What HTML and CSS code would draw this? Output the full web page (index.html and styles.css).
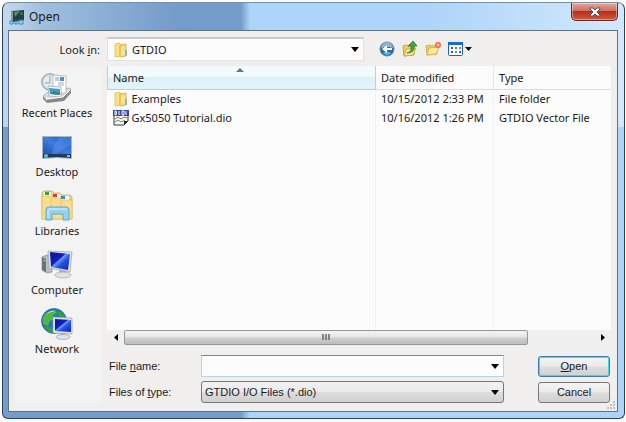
FILE: index.html
```html
<!DOCTYPE html>
<html lang="en">
<head>
  <meta charset="UTF-8" />
  <meta name="viewport" content="width=device-width, initial-scale=1.0"/>
  <title>Open</title>
  <link rel="stylesheet" href="styles.css">
</head>
<body>

  <div class="window">
    <header class="titlebar">
      <svg class="title-icon" width="16" height="16" viewBox="0 0 16 16">
        <path d="M2 2l2-1v12l-2-1z" fill="#8c9a9c"/>
        <path d="M4 2l11-1v10L4 13z" fill="#23413a"/>
        <path d="M5 3l6-1-5 6z" fill="#5f8b78"/>
        <path d="M11 3h3v3h-3z" fill="#3b6655"/>
        <path d="M1 12h3v3H1zM6 12h2v3H6zM10 11h4v4h-4z" fill="none" stroke="#2d8ac4"/>
      </svg>
      <h1>Open</h1>
      <button class="close" aria-label="Close">
        <svg width="12" height="10" viewBox="0 0 12 10">
          <path d="M1 1h3l2 2 2-2h3v1L8 5l3 3v1H8L6 7 4 9H1V8l3-3-3-3z" fill="#fff" stroke="#6b4a52" stroke-width="1"/>
        </svg>
      </button>
    </header>

    <main class="client">
      <label class="look-label" for="lookIn">Look <u>i</u>n:</label>
      <div class="look-row">
        <div class="combo look-combo">
          <svg class="combo-icon" width="16" height="16" viewBox="0 0 16 16">
            <path d="M2 2l5-1v13l-5 1z" fill="#f8e08a" stroke="#e6c765"/>
            <path d="M7 3l6-1v12l-6 1z" fill="#f3d26a" stroke="#e0b94e"/>
            <path d="M8 5l4-1v9l-4 1z" fill="#f9e290"/>
            <path d="M12 8h2v6h-2z" fill="#8cb9c4"/>
          </svg>
          <select id="lookIn"><option>GTDIO</option></select>
          <svg class="arrow" width="8" height="5" viewBox="0 0 8 5"><path d="M0 0h8L4 5z"/></svg>
        </div>
        <div class="toolbar">
          <button aria-label="Back">
            <svg width="16" height="16" viewBox="0 0 16 16">
              <circle cx="8" cy="8" r="7" fill="#2a6aa8" stroke="#6d7d8e"/>
              <path d="M2 7a6 6 0 0 1 12 0q-6-2-12 0z" fill="#8fb3d2"/>
              <path d="M4 12q4 4 8 0-4-3-8 0z" fill="#40c0ee"/>
              <path d="M3 8l5-4v3h5v2H8v3z" fill="#fff"/>
            </svg>
          </button>
          <button aria-label="Up One Level">
            <svg width="16" height="16" viewBox="0 0 16 16">
              <path d="M1 5l4-1 1 1 6-1v10l-10 1z" fill="#f2cd62" stroke="#cfa43c"/>
              <path d="M2 15l2-7 10-1-3 7z" fill="#fbe89a" stroke="#d5ab42"/>
              <path d="M5 12q5-1 4-7H6l5-5 4 5h-3q1 7-7 7z" fill="#3cab35" stroke="#1c7424" stroke-width=".7"/>
            </svg>
          </button>
          <button aria-label="Create New Folder">
            <svg width="16" height="16" viewBox="0 0 16 16">
              <path d="M1 5l4-1 1 1 6-1v9L2 14z" fill="#f2cd62" stroke="#d8b04a"/>
              <path d="M2 14l2-7 10-1-3 7z" fill="#fdeaa2" stroke="#dbb44e"/>
              <circle cx="13" cy="4" r="3" fill="#f26a3c"/>
              <path d="M13 2v4M11 4h4" stroke="#ffc8a0"/>
            </svg>
          </button>
          <button class="view-button" aria-label="View Menu">
            <svg width="25" height="14" viewBox="0 0 25 14">
              <rect x=".5" y=".5" width="14" height="13" rx="1" fill="#fff" stroke="#1563c8"/>
              <path d="M0 0h15v3H0z" fill="#1b6ad4"/>
              <path d="M3 5h2v2H3zM11 9h2v2h-2z" fill="#3a62c0"/>
              <path d="M7 5h2v2H7z" fill="#4a9a5a"/>
              <path d="M11 5h2v2h-2z" fill="#d86a4a"/>
              <path d="M3 9h2v2H3z" fill="#555"/>
              <path d="M7 9h2v2H7z" fill="#38a0dc"/>
              <path d="M17 5h7l-3.500 4z" fill="#111"/>
            </svg>
          </button>
        </div>
      </div>

      <nav class="places">
        <a href="#">
          <svg width="32" height="32" viewBox="0 0 32 32">
            <path d="M2 24l20-2 8-5v4l-7 8-17 2-4-4z" fill="#85898b"/>
            <path d="M2 24l5-4 21-4 2 1-8 8-17 3z" fill="#d9dddd" stroke="#9ba1a3" stroke-width=".7"/>
            <circle cx="9" cy="10" r="8" fill="#e6edf0" stroke="#a9b8bf" stroke-width="2"/>
            <path d="M9 4v7H4" fill="none" stroke="#8fa3af"/>
            <path d="M12 3l13 1v17H12z" fill="#fff" stroke="#9aa8b0" stroke-width=".7"/>
            <path d="M14 6h4M14 8h4" stroke="#8a98a4"/>
            <path d="M19 5h4v4h-4z" fill="#4b94c4"/>
            <path d="M17 11h6M17 13h6" stroke="#a7b2b8"/>
            <path d="M7 14l13 1v10l-12-1z" fill="#f8fbfd" stroke="#8fa5b4" stroke-width=".7"/>
            <path d="M8 16l11 1v6l-10-1z" fill="#3f9ada"/>
            <path d="M9 22l4-3 6 2v2z" fill="#3d8a58"/>
            <path d="M5 27l17-2 7-7" fill="none" stroke="#fff"/>
          </svg>
          Recent Places
        </a>
        <a href="#">
          <svg width="32" height="32" viewBox="0 0 32 32">
            <defs>
              <linearGradient id="deskFill" x1="0" y1="1" x2="1" y2="0">
                <stop offset="0" stop-color="#1c4fae"/><stop offset=".5" stop-color="#3f7cdb"/><stop offset="1" stop-color="#2058c4"/>
              </linearGradient>
            </defs>
            <path d="M1 5h30v23l-15-1-15 1z" fill="#a9b4c2"/>
            <path d="M2 6h28v18H2z" fill="url(#deskFill)"/>
            <path d="M18 6h12v9q-8 1-15 9h-5q3-10 8-18z" fill="#5b94e8" opacity=".45"/>
            <path d="M2 23h28v4l-14-1-14 1z" fill="#1d3a60"/>
            <circle cx="5" cy="25" r="2" fill="#4cc4d8"/>
            <path d="M26 24h3v2h-3z" fill="#8db3d8"/>
          </svg>
          Desktop
        </a>
        <a href="#">
          <svg width="32" height="32" viewBox="0 0 32 32">
            <path d="M1 3l2-2h8l2 2h6l2 2h8l2 2v22H1z" fill="#f1cf7c" stroke="#cfa54a" stroke-width=".7"/>
            <path d="M3 2h7v4H3zM12 4h7v4h-7zM20 6h8v4h-8z" fill="#fff"/>
            <path d="M4 2h4v3H4z" fill="#2ea838"/>
            <path d="M12 4h4v3h-4z" fill="#d8402c"/>
            <path d="M20 6h4v3h-4z" fill="#2f8ad8"/>
            <path d="M1 6h9l2 2h7l2 2h10v19H1z" fill="#f8dd8e" stroke="#e0bb64" stroke-width=".7"/>
            <path d="M10 8v10M20 10v8" stroke="#e6c26c"/>
            <path d="M5 30V20q0-3 3-3h17q3 0 3 3v10h-6v-6H11v6H5z" fill="#96d2ee" stroke="#5ba8cf"/>
            <path d="M7 28v-8q0-1 2-1h15q2 0 2 1" fill="none" stroke="#dff4fd"/>
          </svg>
          Libraries
        </a>
        <a href="#">
          <svg width="32" height="32" viewBox="0 0 32 32">
            <defs>
              <linearGradient id="screenFill" x1="0" y1="0" x2="1" y2="1">
                <stop offset="0" stop-color="#0b148c"/><stop offset=".42" stop-color="#1020c8"/><stop offset=".46" stop-color="#6d9bf4"/><stop offset=".62" stop-color="#2450e4"/><stop offset="1" stop-color="#1022b8"/>
              </linearGradient>
            </defs>
            <path d="M1 8l5-2 5 2v15l-5 1-5-3z" fill="#b9bec2" stroke="#84898e" stroke-width=".7"/>
            <path d="M1 8l4 2v13l-4-2z" fill="#6c7278"/>
            <path d="M2 10l3 1v2l-3-1z" fill="#48d050"/>
            <path d="M18 21h7v5h-7z" fill="#aeb4ba"/>
            <ellipse cx="22" cy="26" rx="8" ry="3" fill="#dfe2e5" stroke="#a2a7ac" stroke-width=".7"/>
            <path d="M7 2l24 1-2 20-21-4z" fill="#dfe3e7" stroke="#9ba2a9" stroke-width=".7"/>
            <path d="M9 3l20 2-2 16-17-3z" fill="url(#screenFill)"/>
          </svg>
          Computer
        </a>
        <a href="#">
          <svg width="32" height="32" viewBox="0 0 32 32">
            <circle cx="13" cy="13" r="12.500" fill="#2573c8" stroke="#2260a0" stroke-width=".7"/>
            <path d="M2 9q4-7 12-7l2 3-4 2 1 4-4 2-2 5-5-2q-1-4 0-7z" fill="#4fb83e"/>
            <path d="M18 3q5 2 6 7l-5-1-3-3zM3 18l7 1 3 6q-7-1-10-7z" fill="#36a034"/>
            <path d="M5 7q4-5 9-4-6 1-9 4z" fill="#c8f0b4"/>
            <path d="M19 25h5v3h-5z" fill="#aeb4ba"/>
            <ellipse cx="22" cy="29" rx="7" ry="2.500" fill="#dfe2e5" stroke="#9a9fa4" stroke-width=".7"/>
            <path d="M12 9l19 1v16l-19-1z" fill="#dfe3e7" stroke="#9ba2a9" stroke-width=".7"/>
            <path d="M14 11l16 1v12l-16-1z" fill="url(#screenFill)"/>
          </svg>
          Network
        </a>
      </nav>

      <div class="content">
        <section class="file-list">
          <table>
            <colgroup><col class="col-name"><col class="col-date"><col></colgroup>
            <thead>
              <tr>
                <th class="sorted">Name
                  <svg class="sort-mark" width="8" height="4" viewBox="0 0 8 4"><path d="M0 4l4-4 4 4z" fill="#4a7fa0"/></svg>
                </th>
                <th>Date modified</th>
                <th>Type</th>
              </tr>
            </thead>
            <tbody>
              <tr>
                <td>
                  <div class="file">
                    <svg width="16" height="16" viewBox="0 0 16 16">
                      <path d="M2 2l5-1v13l-5 1z" fill="#f8e08a" stroke="#e6c765"/>
                      <path d="M7 3l6-1v12l-6 1z" fill="#f3d26a" stroke="#e0b94e"/>
                      <path d="M8 5l4-1v9l-4 1z" fill="#f9e290"/>
                      <path d="M12 8h2v6h-2z" fill="#8cb9c4"/>
                    </svg>
                    Examples
                  </div>
                </td>
                <td>10/15/2012 2:33 PM</td>
                <td>File folder</td>
              </tr>
              <tr>
                <td>
                  <div class="file">
                    <svg width="16" height="16" viewBox="0 0 16 16">
                      <path d="M1 1h14v10l-4 4H1z" fill="#fff" stroke="#333"/>
                      <path d="M0 0h16v6H0z" fill="#3443a8"/>
                      <path d="M2 1v4h1q1-2 0-4zM6 1v4M9 1h2v4H9zM13 1v4" fill="none" stroke="#fff"/>
                      <path d="M2 9l3-2 3 2 3-2 3 1" fill="none" stroke="#d04848"/>
                      <path d="M2 12l3-2 3 2 4-2" fill="none" stroke="#3c9c48"/>
                      <path d="M11 15v-4h4z" fill="#222"/>
                    </svg>
                    Gx5050 Tutorial.dio
                  </div>
                </td>
                <td>10/16/2012 1:26 PM</td>
                <td>GTDIO Vector File</td>
              </tr>
            </tbody>
            <tfoot><tr><td></td><td></td><td></td></tr></tfoot>
          </table>
          <div class="scrollbar">
            <button aria-label="Scroll left"><svg width="4" height="7" viewBox="0 0 4 7"><path d="M4 0v7L0 3.500z"/></svg></button>
            <div class="track">
              <div class="thumb"><svg width="9" height="7" viewBox="0 0 9 7"><path d="M1 0v6M4 0v6M7 0v6" stroke="#666" stroke-width="1.500"/></svg></div>
            </div>
            <button aria-label="Scroll right"><svg width="4" height="7" viewBox="0 0 4 7"><path d="M0 0v7l4-3.500z"/></svg></button>
          </div>
        </section>

        <form class="fields">
          <label for="fileName">File <u>n</u>ame:</label>
          <div class="combo name-combo">
            <input type="text" id="fileName" />
            <svg class="arrow" width="8" height="5" viewBox="0 0 8 5"><path d="M0 0h8L4 5z"/></svg>
          </div>
          <button type="button" class="button default"><span><u>O</u>pen</span></button>

          <label for="fileType">Files of <u>t</u>ype:</label>
          <div class="combo type-combo">
            <select id="fileType"><option>GTDIO I/O Files (*.dio)</option></select>
            <svg class="arrow" width="8" height="5" viewBox="0 0 8 5"><path d="M0 0h8L4 5z"/></svg>
          </div>
          <button type="button" class="button">Cancel</button>
        </form>
      </div>

      <svg class="grip" width="9" height="9" viewBox="0 0 9 9">
        <path d="M6 0h2v2H6zM3 3h2v2H3zM6 3h2v2H6zM0 6h2v2H0zM3 6h2v2H3zM6 6h2v2H6z" fill="#c2c1c0"/>
      </svg>
    </main>
  </div>

</body>
</html>
```
FILE: styles.css
```css
* {
  box-sizing: border-box;
}

body {
  margin: 0;
  padding: 2px 1px 2px 2px;
  background-color: #fbfbfb;
  font-family: "Noto Sans", "Open Sans", sans-serif;
  font-size: 11px;
  color: #1a1a1a;
}

button,
input,
select {
  font: inherit;
  color: inherit;
}

/* Window frame */
.window {
  padding: 0 6px 6px 5px;
  border: 1px solid #2b3f55;
  border-top-color: #7690a8;
  border-radius: 7px 7px 6px 6px;
  background:
    linear-gradient(90deg, #c4daee, #9fbfdf 40px, rgba(124, 162, 204, 0) 170px) 0 0 / 243px 28px no-repeat,
    linear-gradient(#bcd6ef, #bcd6ef) 0 28px / 6px 96px no-repeat,
    linear-gradient(#d3e8fb, #d3e8fb) 100% 28px / 7px 96px no-repeat,
    linear-gradient(90deg, rgba(211, 232, 251, 0), #d3e8fb) 100% 0 / 200px 28px no-repeat,
    linear-gradient(90deg, #759dcb 238px, #add4f9 247px);
}

.titlebar {
  display: flex;
  align-items: center;
  gap: 4px;
  height: 27px;
}

.title-icon {
  margin-left: 1px;
}

h1 {
  flex: 1;
  margin: 0;
  font-size: 12px;
  font-weight: normal;
}

.close {
  align-self: flex-start;
  display: flex;
  align-items: center;
  justify-content: center;
  width: 47px;
  height: 18px;
  padding: 0;
  border: 1px solid #5c2a2a;
  border-top: none;
  border-radius: 0 0 5px 5px;
  background: linear-gradient(#e3a99c, #cf6f60 45%, #b5301c 50%, #cc5a40);
  box-shadow: inset 0 0 0 1px rgba(255, 255, 255, 0.4);
}

.client {
  position: relative;
  display: grid;
  grid-template-columns: 86px 1fr;
  gap: 5px 6px;
  padding: 6px 6px 8px 6px;
  border: 1px solid #5f7388;
  background-color: #f0efee;
}

/* Look in row */
.look-label {
  align-self: center;
  padding-right: 1px;
  text-align: right;
}

.look-row {
  display: flex;
  gap: 15px;
}

.combo {
  display: flex;
  align-items: center;
}

.combo select,
.combo input {
  flex: 1;
  min-width: 0;
  height: 100%;
  padding: 0 3px;
  border: none;
  outline: none;
  background: transparent;
  appearance: none;
}

.combo .arrow {
  flex: none;
  margin: 0 4px;
  pointer-events: none;
}

.look-combo {
  flex: 0 1 257px;
  height: 24px;
  padding-left: 5px;
  border: 1px solid #e2e2e2;
  border-top: 2px solid #cbcbcb;
  background-color: #fcfcfc;
}

.toolbar {
  display: flex;
  align-items: center;
  gap: 7px;
}

.toolbar button {
  display: flex;
  padding: 0;
  border: none;
  background: none;
}

/* Places bar */
.places {
  display: flex;
  flex-direction: column;
  gap: 9px;
  padding: 6px 2px 0 0;
  background-color: #f4f3f3;
}

.places a {
  display: flex;
  flex-direction: column;
  align-items: center;
  line-height: 18px;
  color: inherit;
  text-decoration: none;
}

/* File list */
.file-list {
  background-color: #fcfcfc;
}

table {
  width: 100%;
  border-collapse: collapse;
  table-layout: fixed;
}

.col-name {
  width: 268px;
}

.col-date {
  width: 118px;
}

th {
  position: relative;
  height: 23px;
  padding: 0 5px;
  border-right: 1px solid #e8e8e8;
  border-bottom: 1px solid #dcdcdc;
  text-align: left;
  font-weight: normal;
}

th.sorted {
  border: 1px solid #9bdcf5;
  border-top: none;
  background: linear-gradient(#f3fafe 45%, #dcf0fb 50%, #e2f3fc);
}

.sort-mark {
  position: absolute;
  top: 2px;
  left: 128px;
}

td {
  height: 19px;
  padding: 0 5px;
  border-right: 1px solid #f2f2f2;
  white-space: nowrap;
}

th:last-child,
td:last-child {
  border-right: none;
}

/* empty part of the list below the files */
tfoot td {
  height: 203px;
}

.file {
  display: flex;
  align-items: center;
  gap: 3px;
}

.scrollbar {
  display: flex;
  height: 15px;
  background-color: #f0f0f0;
}

.scrollbar button {
  display: flex;
  align-items: center;
  justify-content: center;
  width: 17px;
  padding: 0;
  border: none;
  background: none;
}

.track {
  flex: 1;
}

.thumb {
  display: flex;
  align-items: center;
  justify-content: center;
  width: 86%;
  height: 15px;
  border: 1px solid #979797;
  border-radius: 2px;
  background: linear-gradient(#f3f3f3, #e6e6e6 45%, #cfcfd1 55%, #bdbdc0);
}

/* File name and type */
.fields {
  display: grid;
  grid-template-columns: 92px 1fr 72px;
  align-items: center;
  row-gap: 4px;
  margin: 10px 1px 0 2px;
  font-family: "Liberation Sans", Arial, sans-serif;
  font-size: 11px;
}

.name-combo,
.type-combo {
  height: 22px;
  margin-right: 34px;
}

.name-combo {
  border: 1px solid #b5d3ec;
  border-top-color: #5a8fc0;
  background-color: #fcfcfc;
}

.type-combo {
  border: 1px solid #777;
  border-radius: 3px;
  background: linear-gradient(#f2f2f2, #ebebeb 48%, #dddddd 52%, #cfcfcf);
}

.button {
  height: 21px;
  padding: 0;
  border: 1px solid #777;
  border-radius: 3px;
  background: linear-gradient(#f4f4f4, #ebebeb 48%, #dddddd 52%, #d0d0d0);
}

.button.default {
  border-color: #3c7fa8;
  box-shadow: inset 0 0 0 1px #48d2f4;
}

.grip {
  position: absolute;
  right: 1px;
  bottom: 1px;
}
```
